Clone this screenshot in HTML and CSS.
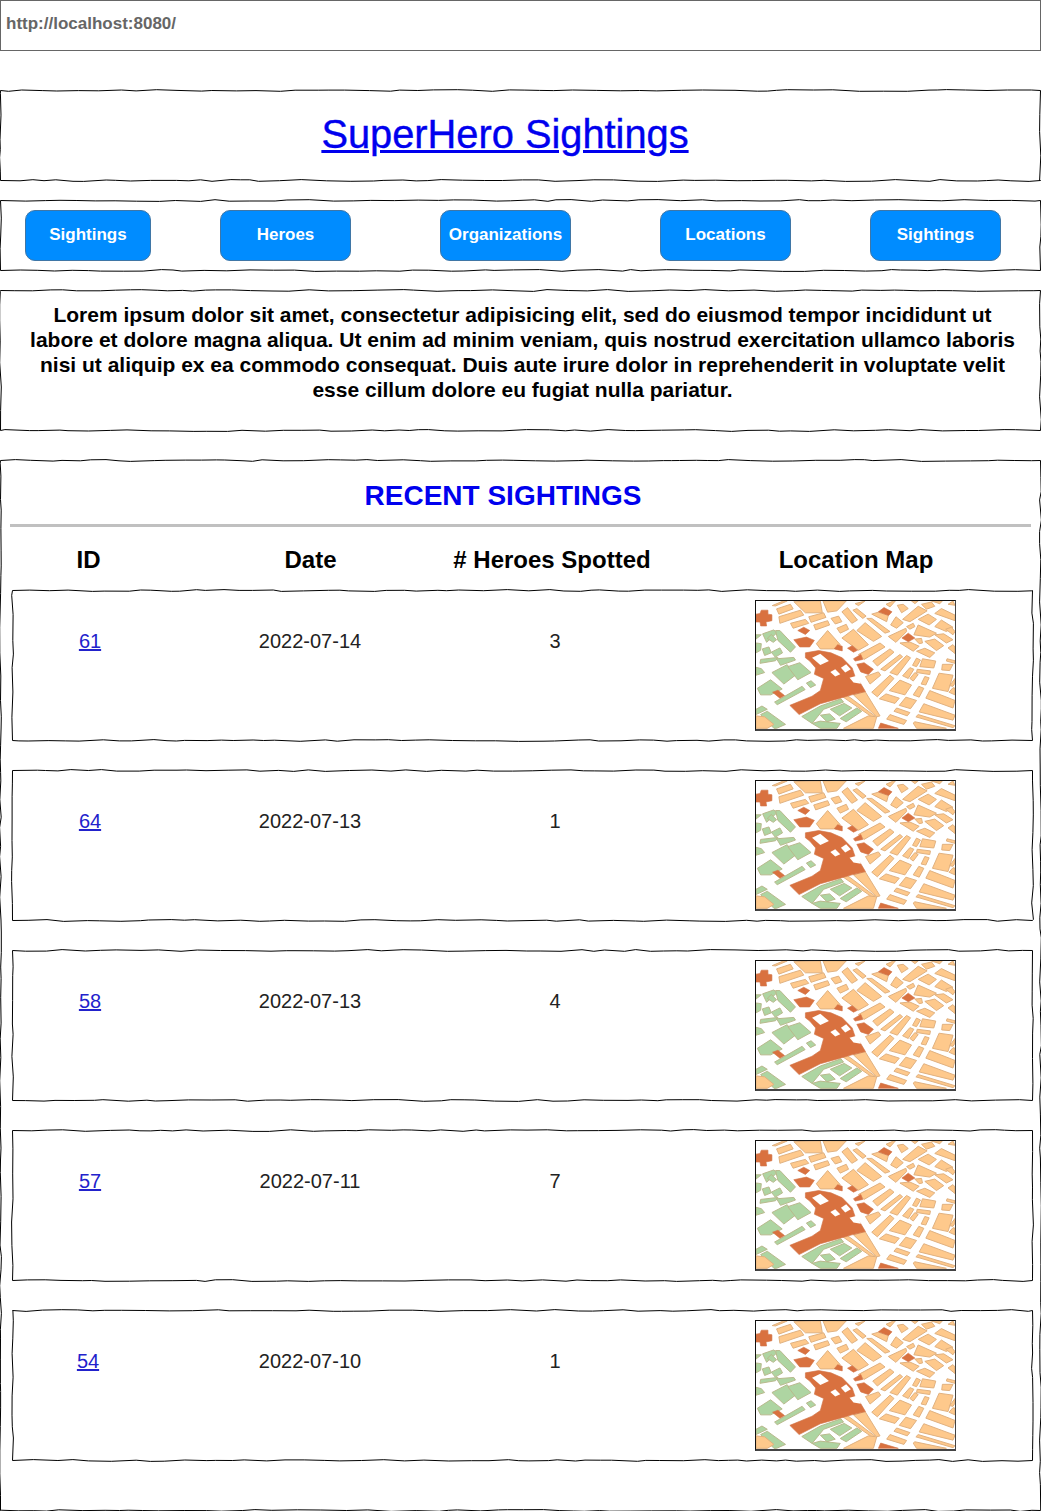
FILE: index.html
```html
<!DOCTYPE html>
<html lang="en">
<head>
<meta charset="utf-8">
<title>SuperHero Sightings</title>
<link rel="stylesheet" href="styles.css">
</head>
<body>
<svg class="defs" width="0" height="0" aria-hidden="true">
  <defs>
    <symbol id="map" viewBox="46 32 600 390" preserveAspectRatio="none">
      <g class="grn">
        <polygon points="46,135 62,135 46,148"/>
        <polygon points="66,132 100,120 108,130 78,158"/>
        <polygon points="80,146 92,134 108,150 98,158"/>
        <polygon points="105,122 118,122 165,172 150,188 112,152"/>
        <polygon points="65,178 85,172 92,190 72,198"/>
        <polygon points="46,160 62,162 60,182 46,190"/>
        <polygon points="92,188 118,175 126,190 104,203"/>
        <polygon points="58,222 105,214 112,204 60,210"/>
        <polygon points="108,208 160,204 165,212 120,228"/>
        <polygon points="46,234 62,238 72,250 46,258"/>
        <polygon points="94,250 140,226 165,258 130,285"/>
        <polygon points="142,232 178,220 212,250 172,272"/>
        <polygon points="50,298 90,272 125,300 90,318 60,318"/>
        <polygon points="198,282 212,275 226,288 210,296"/>
        <polygon points="102,340 185,292 194,302 110,348"/>
        <polygon points="46,362 64,352 80,362 46,378"/>
        <polygon points="60,378 80,368 135,408 108,420 100,420"/>
        <polygon points="184,384 240,352 302,330 310,340 250,362 215,405"/>
        <polygon points="270,362 312,344 335,358 298,382"/>
        <polygon points="240,380 268,376 285,392 260,400"/>
        <polygon points="215,405 240,398 300,405 290,420 240,420"/>
        <polygon points="300,390 350,358 365,368 318,400"/>
      </g>
      <g class="blk">
        <polygon points="95,46 128,32 140,32 105,47"/>
        <polygon points="160,34 240,32 246,68 195,68"/>
        <polygon points="248,32 318,32 290,62 262,66"/>
        <polygon points="108,56 150,42 158,56 115,72"/>
        <polygon points="115,80 180,60 190,75 118,100"/>
        <polygon points="205,80 250,68 257,82 212,97"/>
        <polygon points="150,100 195,88 205,100 158,115"/>
        <polygon points="220,105 262,92 268,105 226,120"/>
        <polygon points="272,85 295,78 305,95 285,102"/>
        <polygon points="290,115 318,103 325,118 300,130"/>
        <polygon points="305,65 322,52 352,90 335,100"/>
        <polygon points="338,60 350,55 378,78 368,85"/>
        <polygon points="345,40 375,32 355,46"/>
        <polygon points="395,72 415,66 445,76 440,95"/>
        <polygon points="438,42 460,32 466,32 450,50"/>
        <polygon points="472,45 490,42 505,55 485,68"/>
        <polygon points="488,88 535,48 562,62 510,95"/>
        <polygon points="452,105 468,80 490,98 470,115"/>
        <polygon points="535,88 565,72 590,88 568,105"/>
        <polygon points="585,70 605,55 646,75 646,92"/>
        <polygon points="585,110 605,90 640,112 620,125"/>
        <polygon points="545,42 575,35 585,48 560,57"/>
        <polygon points="515,32 535,32 525,40"/>
        <polygon points="575,32 608,32 600,40"/>
        <polygon points="625,42 640,32 646,45"/>
        <polygon points="618,118 635,112 646,125 640,135"/>
        <polygon points="380,85 395,85 450,125 435,130"/>
        <polygon points="350,122 375,98 425,140 400,155"/>
        <polygon points="305,145 340,118 385,165 355,182"/>
        <polygon points="228,162 262,122 300,165 280,178 240,178"/>
        <polygon points="445,140 498,115 500,125 468,158"/>
        <polygon points="500,110 520,100 525,110 510,118"/>
        <polygon points="522,135 535,105 590,130 570,142"/>
        <polygon points="480,160 510,157 538,170 520,185"/>
        <polygon points="525,148 545,146 548,160 538,162"/>
        <polygon points="555,155 585,148 612,168 590,183"/>
        <polygon points="530,185 555,176 585,190 570,204"/>
        <polygon points="585,135 612,132 640,150 620,160"/>
        <polygon points="625,175 640,165 646,172 646,192"/>
        <polygon points="355,195 420,160 435,172 372,210"/>
        <polygon points="398,215 450,178 462,188 412,230"/>
        <polygon points="422,240 480,195 488,202 435,245"/>
        <polygon points="450,250 500,198 512,205 472,258"/>
        <polygon points="518,228 530,206 542,212 530,232"/>
        <polygon points="548,208 588,215 582,236 540,232"/>
        <polygon points="608,225 640,225 630,244 606,242"/>
        <polygon points="622,208 646,214 646,222 620,215"/>
        <polygon points="488,260 510,235 522,240 505,268"/>
        <polygon points="510,268 525,250 535,256 520,276"/>
        <polygon points="532,240 572,245 570,256 530,250"/>
        <polygon points="544,285 555,262 568,266 558,288"/>
        <polygon points="376,262 415,248 422,258 390,285"/>
        <polygon points="395,310 450,258 462,268 412,324"/>
        <polygon points="448,305 480,273 515,288 495,318"/>
        <polygon points="520,318 537,292 552,298 538,325"/>
        <polygon points="578,298 598,252 640,258 625,308"/>
        <polygon points="630,290 646,268 646,282 640,292"/>
        <polygon points="628,310 640,296 646,298 646,318"/>
        <polygon points="558,328 570,305 646,335 640,358"/>
        <polygon points="418,330 438,315 478,328 465,344"/>
        <polygon points="478,350 498,325 530,335 512,360"/>
        <polygon points="462,368 470,358 510,372 502,382"/>
        <polygon points="538,370 552,345 646,380 640,395"/>
        <polygon points="440,392 450,378 500,396 492,408"/>
        <polygon points="528,385 535,378 646,412 640,418"/>
        <polygon points="520,404 525,400 620,420 530,420"/>
        <polygon points="340,318 375,308 420,382 410,385"/>
        <polygon points="302,320 315,315 405,383 395,385"/>
        <polygon points="310,420 385,382 410,385 400,420"/>
        <polygon points="46,382 72,385 100,408 80,420 46,420"/>
      </g>
      <g class="drk">
        <polygon points="58,70 62,60 82,60 82,72 94,74 94,92 76,96 78,108 60,108 58,96 46,96 46,72"/>
        <polygon points="172,122 190,112 208,122 195,134"/>
        <polygon points="160,150 198,142 222,152 208,172 178,172"/>
        <polygon points="282,178 292,165 306,170 306,184"/>
        <polygon points="322,176 336,168 352,182 340,188"/>
        <polygon points="340,208 362,195 368,210 345,215"/>
        <polygon points="350,225 372,220 400,240 385,256 362,248"/>
        <polygon points="415,65 432,52 456,65 446,76"/>
        <polygon points="486,145 505,130 525,145 505,156"/>
        <polygon points="96,310 112,304 132,320 118,328"/>
        <polygon points="415,420 422,404 475,420"/>
        <polygon points="195,190 235,183 272,190 306,205 336,236 346,266 362,284 376,308 335,318 300,328 240,345 176,378 148,350 215,322 240,305 250,268 222,255 226,236 208,215 195,205"/>
      </g>
      <g class="hole">
        <polygon points="215,205 240,193 266,215 240,227"/>
        <polygon points="270,248 285,240 300,255 285,262"/>
        <polygon points="302,235 318,225 332,240 315,250"/>
        <polygon points="328,266 350,260 362,284 340,280"/>
      </g>
    </symbol>
  </defs>
</svg>

<div class="address">http://localhost:8080/</div>

<header class="box title-box">
  <h1 class="title"><a href="#">SuperHero Sightings</a></h1>
</header>

<nav class="box nav">
  <a class="btn btn-a" href="#">Sightings</a>
  <a class="btn btn-b" href="#">Heroes</a>
  <a class="btn btn-c" href="#">Organizations</a>
  <a class="btn btn-d" href="#">Locations</a>
  <a class="btn btn-e" href="#">Sightings</a>
</nav>

<section class="box intro">
  <p>Lorem ipsum dolor sit amet, consectetur adipisicing elit, sed do eiusmod tempor incididunt ut labore et dolore magna aliqua. Ut enim ad minim veniam, quis nostrud exercitation ullamco laboris nisi ut aliquip ex ea commodo consequat. Duis aute irure dolor in reprehenderit in voluptate velit esse cillum dolore eu fugiat nulla pariatur.</p>
</section>

<main class="box recent">
  <h2 class="recent-title">RECENT SIGHTINGS</h2>
  <hr class="rule">
  <div class="heads">
    <div>ID</div>
    <div>Date</div>
    <div># Heroes Spotted</div>
    <div>Location Map</div>
  </div>
  <div class="rows">
    <article class="box row">
      <a class="id" href="#">61</a><div>2022-07-14</div><div>3</div>
      <svg class="map"><use href="#map"/></svg>
    </article>
    <article class="box row">
      <a class="id" href="#">64</a><div>2022-07-13</div><div>1</div>
      <svg class="map"><use href="#map"/></svg>
    </article>
    <article class="box row">
      <a class="id" href="#">58</a><div>2022-07-13</div><div>4</div>
      <svg class="map"><use href="#map"/></svg>
    </article>
    <article class="box row">
      <a class="id" href="#">57</a><div>2022-07-11</div><div>7</div>
      <svg class="map"><use href="#map"/></svg>
    </article>
    <article class="box row">
      <a class="id id-left" href="#">54</a><div>2022-07-10</div><div>1</div>
      <svg class="map"><use href="#map"/></svg>
    </article>
  </div>
</main>
<script src="script.js"></script>
</body>
</html>
```
FILE: styles.css
```css
* { box-sizing: border-box; }

html, body { margin: 0; padding: 0; background: #fff; }

body {
  width: 1041px;
  height: 1511px;
  overflow: hidden;
  font-family: "Liberation Sans", Arial, sans-serif;
  color: #000;
}

.defs { display: block; height: 0; }

.address {
  height: 51px;
  border: 1px solid #666;
  padding: 13px 5px 0;
  font-size: 17px;
  line-height: 19px;
  font-weight: 700;
  color: #666;
}

.box { position: relative; }

.wobble {
  position: absolute;
  left: 0;
  top: 0;
  width: 100%;
  height: 100%;
  overflow: visible;
  pointer-events: none;
}

.wobble path {
  fill: none;
  stroke: #000;
  stroke-width: 1;
}

.title-box {
  height: 91px;
  margin-top: 39px;
  display: flex;
  align-items: center;
  justify-content: center;
  padding: 0 31px 4px 0;
}

.title {
  margin: 0;
  font-size: 39.8px;
  line-height: 46px;
  font-weight: 400;
  -webkit-text-stroke: 0.4px #00e;
}

.title a { color: #00e; }

.nav {
  height: 71px;
  margin-top: 19px;
  display: flex;
  align-items: flex-start;
  padding: 10px 0 0 25px;
}

.btn {
  display: flex;
  align-items: center;
  justify-content: center;
  height: 51px;
  padding-bottom: 2px;
  border: 1px solid #3f76a6;
  border-radius: 10px;
  background: #008cff;
  color: #fff;
  font-size: 17px;
  font-weight: 700;
  text-decoration: none;
}

.btn-a { width: 126px; }
.btn-b { width: 131px; margin-left: 69px; }
.btn-c { width: 131px; margin-left: 89px; }
.btn-d { width: 131px; margin-left: 89px; }
.btn-e { width: 131px; margin-left: 79px; }

.intro {
  height: 141px;
  margin-top: 19px;
  padding: 12px 25px 0 29px;
}

.intro p {
  margin: 0;
  font-size: 21px;
  line-height: 25px;
  font-weight: 700;
  text-align: center;
  color: #000;
}

.recent {
  height: 1051px;
  margin-top: 29px;
  padding-top: 20px;
}

.recent-title {
  margin: 0 35px 0 0;
  height: 31px;
  font-size: 28px;
  line-height: 31px;
  font-weight: 700;
  text-align: center;
  color: #00e;
}

.rule {
  margin: 13px 10px 0;
  height: 3px;
  border: 0;
  background: #c0c0c0;
}

.heads {
  display: grid;
  grid-template-columns: 177px 267px 216px 1fr;
  height: 63px;
  padding-top: 19px;
  font-size: 24px;
  line-height: 28px;
  font-weight: 700;
  text-align: center;
}

.heads > div:last-child { width: 392px; }

.rows {
  display: flex;
  flex-direction: column;
  gap: 29px;
  margin-left: 12px;
  width: 1021px;
}

.row {
  display: grid;
  grid-template-columns: 156px 284px 206px 1fr;
  height: 151px;
  padding-top: 39px;
  font-size: 20px;
  line-height: 24px;
  text-align: center;
  color: #222;
}

.id { color: #2222cc; justify-self: center; }
.id-left { margin-right: 4px; }

.map {
  display: block;
  width: 201px;
  height: 131px;
  margin: -29px 0 0 97px;
  border: 1px solid #111;
  border-right: 1px solid #444;
  border-bottom: 2px solid #444;
  background: #fff;
}

.blk polygon { fill: #fec98c; stroke: #e0b07e; stroke-width: 3; }
.grn polygon { fill: #aed5a2; stroke: #b8b88c; stroke-width: 3; }
.drk polygon { fill: #d9713f; stroke: #d2754a; stroke-width: 2; }
.hole polygon { fill: #fff; }
```
FILE: script.js
```js
// Draws the hand-sketched outline of every .box as a wobbly SVG path.
(function () {
  var NS = "http://www.w3.org/2000/svg";
  var seed = 7;
  function rnd() {
    seed = (seed * 16807) % 2147483647;
    return seed / 2147483647;
  }
  function jitter() {
    return (rnd() - 0.5) * 1.9;
  }
  function edge(x0, y0, x1, y1) {
    var len = Math.hypot(x1 - x0, y1 - y0);
    var horizontal = y0 === y1;
    var out = [];
    var t = 0;
    while (t < len) {
      t += 8 + rnd() * 18;
      if (t >= len) break;
      var f = t / len;
      var x = x0 + (x1 - x0) * f;
      var y = y0 + (y1 - y0) * f;
      if (horizontal) y += jitter();
      else x += jitter();
      out.push(x.toFixed(1) + " " + y.toFixed(1));
    }
    out.push(x1 + " " + y1);
    return out;
  }
  document.querySelectorAll(".box").forEach(function (box) {
    var w = box.offsetWidth - 0.5;
    var h = box.offsetHeight - 0.5;
    var pts = ["0.5 0.5"]
      .concat(edge(0.5, 0.5, w, 0.5))
      .concat(edge(w, 0.5, w, h))
      .concat(edge(w, h, 0.5, h))
      .concat(edge(0.5, h, 0.5, 0.5));
    var svg = document.createElementNS(NS, "svg");
    svg.setAttribute("class", "wobble");
    var path = document.createElementNS(NS, "path");
    path.setAttribute("d", "M" + pts.join("L"));
    svg.appendChild(path);
    box.appendChild(svg);
  });
})();
```
